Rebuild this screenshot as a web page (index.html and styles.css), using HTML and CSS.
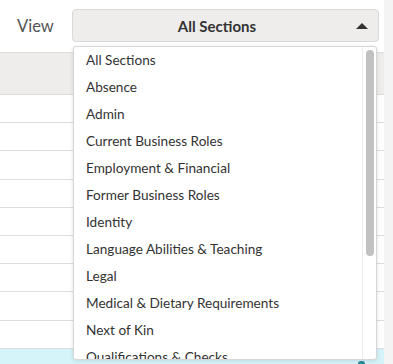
FILE: index.html
```html
<!DOCTYPE html>
<html>
<head>
<meta charset="utf-8">
<link rel="stylesheet" href="styles.css">
</head>
<body>
<div class="page">
  <div class="main">
    <div class="topbar">
      <span class="label">View</span>
      <div class="select">
        <span class="select-text">All Sections</span>
        <span class="caret"></span>
      </div>
    </div>
    <div class="table">
      <div class="thead"></div>
      <div class="row"></div>
      <div class="row"></div>
      <div class="row"></div>
      <div class="row"></div>
      <div class="row"></div>
      <div class="row"></div>
      <div class="row"></div>
      <div class="row"></div>
      <div class="row"></div>
      <div class="row hl"><span class="dot"></span></div>
    </div>
    <div class="dropdown">
      <ul class="options">
        <li>All Sections</li>
        <li>Absence</li>
        <li>Admin</li>
        <li>Current Business Roles</li>
        <li>Employment &amp; Financial</li>
        <li>Former Business Roles</li>
        <li>Identity</li>
        <li>Language Abilities &amp; Teaching</li>
        <li>Legal</li>
        <li>Medical &amp; Dietary Requirements</li>
        <li>Next of Kin</li>
        <li>Qualifications &amp; Checks</li>
      </ul>
      <div class="track"><div class="thumb"></div></div>
    </div>
  </div>
  <div class="strip"></div>
</div>
</body>
</html>
```
FILE: styles.css
```css
html, body {
  margin: 0;
  padding: 0;
  background: #fff;
  font-family: Lato, "Noto Sans", sans-serif;
  color: #333;
}
.page {
  display: flex;
  width: 393px;
  height: 364px;
  overflow: hidden;
}
.main {
  flex: 1;
  position: relative;
}
.strip {
  width: 9px;
  background: #f4f4f4;
}
.topbar {
  display: flex;
  align-items: center;
  height: 52px;
  box-sizing: border-box;
  padding: 0 0 1px 17px;
}
.label {
  font-size: 16.5px;
  color: #555;
  width: 55px;
}
.select {
  position: relative;
  width: 307px;
  height: 33px;
  box-sizing: border-box;
  border: 1px solid #d9d9d9;
  border-radius: 4px;
  background: #eeedec;
  display: flex;
  align-items: center;
  justify-content: center;
  padding-right: 17px;
}
.select-text {
  font-weight: bold;
  font-size: 15px;
  color: #333;
}
.caret {
  position: absolute;
  right: 10px;
  top: 13px;
  width: 0;
  height: 0;
  border-left: 6px solid transparent;
  border-right: 6px solid transparent;
  border-bottom: 6px solid #333;
}
.table {
  display: flex;
  flex-direction: column;
}
.thead {
  height: 43px;
  box-sizing: border-box;
  background: #eeedec;
  border-top: 1px solid #dedddc;
  border-bottom: 1px solid #dedddc;
}
.row {
  height: 28.2px;
  box-sizing: border-box;
  border-bottom: 1px solid #dddddd;
  position: relative;
}
.row.hl {
  background: #d5f4fa;
  border-bottom: none;
}
.dot {
  position: absolute;
  left: 358px;
  top: 12px;
  width: 7px;
  height: 7px;
  border-radius: 3px;
  background: #2a8a97;
}
.dropdown {
  position: absolute;
  left: 73px;
  top: 46px;
  width: 304px;
  height: 314px;
  box-sizing: border-box;
  background: #fff;
  border: 1px solid #d6d6d6;
  border-radius: 3px;
  box-shadow: 0 1px 4px rgba(0,0,0,0.12);
  display: flex;
  overflow: hidden;
}
.options {
  flex: 1;
  list-style: none;
  margin: 0;
  padding: 0;
  overflow: hidden;
}
.options li {
  height: 27px;
  line-height: 27px;
  padding-left: 12px;
  font-size: 13.6px;
  color: #333;
  white-space: nowrap;
}
.track {
  width: 14px;
  box-sizing: border-box;
  border-left: 1px solid #ececec;
  padding: 3px 2px 0 3px;
}
.thumb {
  width: 8px;
  height: 206px;
  border-radius: 4px;
  background: #c1c1c1;
}
```
